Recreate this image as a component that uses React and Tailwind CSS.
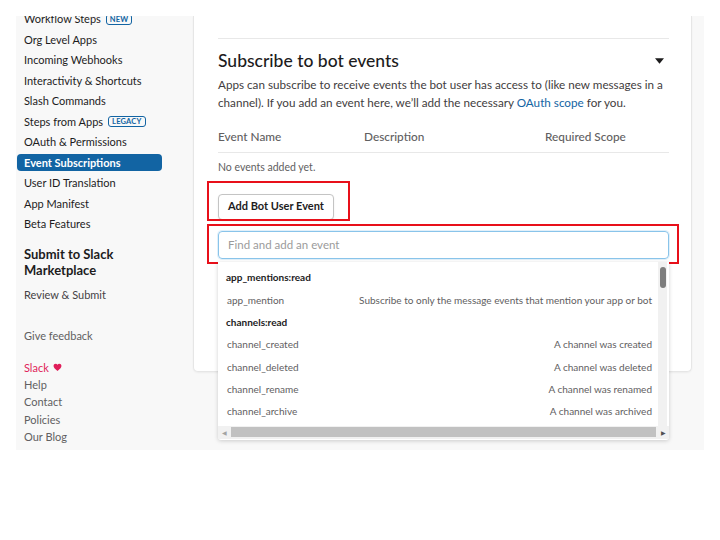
import React from "react";

const navItems = [
  { label: "Workflow Steps", badge: "NEW" },
  { label: "Org Level Apps" },
  { label: "Incoming Webhooks" },
  { label: "Interactivity & Shortcuts" },
  { label: "Slash Commands" },
  { label: "Steps from Apps", badge: "LEGACY" },
  { label: "OAuth & Permissions" },
  { label: "Event Subscriptions", active: true },
  { label: "User ID Translation" },
  { label: "App Manifest" },
  { label: "Beta Features" },
];

const footerLinks = ["Help", "Contact", "Policies", "Our Blog"];

const eventGroups = [
  {
    scope: "app_mentions:read",
    events: [["app_mention", "Subscribe to only the message events that mention your app or bot"]],
  },
  {
    scope: "channels:read",
    events: [
      ["channel_created", "A channel was created"],
      ["channel_deleted", "A channel was deleted"],
      ["channel_rename", "A channel was renamed"],
      ["channel_archive", "A channel was archived"],
    ],
  },
];

const Sidebar = () => (
  <aside className="w-[177px] shrink-0 pl-2 pr-[24px] text-[11px] text-[#1d1c1d]">
    <ul className="-mt-[7px]">
      {navItems.map((item) => (
        <li key={item.label} className="h-[20.5px] flex items-center">
          <span
            className={
              item.active
                ? "w-full h-[17px] flex items-center px-[7px] -ml-[7px] rounded bg-[#1264a3] text-white font-bold"
                : "flex items-center"
            }
          >
            {item.label}
            {item.badge && (
              <span className="ml-[5px] px-[3px] h-[11px] leading-[10px] border border-[#1264a3] rounded-[3px] text-[7.5px] font-bold text-[#1264a3] tracking-wide">
                {item.badge}
              </span>
            )}
          </span>
        </li>
      ))}
    </ul>

    <h3 className="mt-[11px] text-[13px] leading-[16px] font-bold">
      Submit to Slack
      <br />
      Marketplace
    </h3>
    <div className="mt-[9px] text-[#454245]">Review &amp; Submit</div>

    <div className="mt-[25px] text-[#616061]">Give feedback</div>

    <ul className="mt-[14px] text-[#616061] leading-[17.4px]">
      <li className="text-[#e01e5a] flex items-center gap-[4px]">
        Slack
        <svg viewBox="0 0 24 24" className="w-[9px] h-[9px]" fill="#e01e5a">
          <path d="M12 21.5 10.5 20.1C5.1 15.3 1.5 12 1.5 8 1.5 4.7 4.1 2.2 7.3 2.2c1.8 0 3.6.9 4.7 2.3 1.1-1.4 2.9-2.3 4.7-2.3 3.2 0 5.8 2.5 5.8 5.8 0 4-3.6 7.3-9 12.1L12 21.5Z" />
        </svg>
      </li>
      {footerLinks.map((l) => (
        <li key={l}>{l}</li>
      ))}
    </ul>
  </aside>
);

const EventPicker = () => (
  <div className="absolute left-0 right-0 top-[31px] h-[178px] bg-white shadow-[0_1px_4px_rgba(0,0,0,0.18)] rounded-b-[3px] flex flex-col">
    <div className="flex flex-1 min-h-0">
      <div className="flex-1 pt-[5px] pl-[8px] pr-[6px] text-[10px]">
        {eventGroups.map((g) => (
          <div key={g.scope}>
            <div className="h-[22.3px] flex items-center font-bold text-[#1d1c1d]">{g.scope}</div>
            {g.events.map(([name, desc]) => (
              <div key={name} className="h-[22.3px] flex items-center justify-between text-[#616061]">
                <span className="pl-[1px]">{name}</span>
                <span>{desc}</span>
              </div>
            ))}
          </div>
        ))}
      </div>
      <div className="w-[9px] mr-[2px] bg-[#f1f1f1] pt-[5px] flex justify-center">
        <div className="w-[6px] h-[21px] rounded-[3px] bg-[#7d7d7d]" />
      </div>
    </div>
    <div className="h-[13px] mb-[1px] bg-[#f1f1f1] flex items-center px-[2px] gap-[3px]">
      <span className="text-[6px] text-[#a3a3a3] w-[8px] text-center">◀</span>
      <div className="flex-1 h-[10px] bg-[#c1c1c1]" />
      <span className="text-[6px] text-[#505050] w-[8px] text-center">▶</span>
    </div>
  </div>
);

const MainCard = () => (
  <section className="w-[499px] h-[356px] bg-white border border-t-0 border-[#e6e6e6] rounded-b-[5px] shadow-[0_1px_2px_rgba(0,0,0,0.05)] pl-[24px] pr-[22px] pt-[22px] text-[#1d1c1d]">
    <div className="border-t border-[#e8e8e8]" />
    <div className="mt-[10px] flex items-center justify-between">
      <h2 className="text-[17.5px] leading-[24px] font-medium">Subscribe to bot events</h2>
      <svg viewBox="0 0 10 6" className="w-[9px] h-[6px] mr-[5px]" fill="#1d1c1d">
        <path d="M0 0h10L5 6z" />
      </svg>
    </div>
    <p className="mt-[3px] text-[11.7px] leading-[17.5px] text-[#3f3d40]">
      Apps can subscribe to receive events the bot user has access to (like new messages in a
      channel). If you add an event here, we’ll add the necessary{" "}
      <span className="text-[#1264a3]">OAuth scope</span> for you.
    </p>

    <div className="mt-[17px] flex text-[11.8px] text-[#616061] font-medium pb-[6px] border-b border-[#e8e8e8]">
      <span className="w-[146px]">Event Name</span>
      <span className="w-[181px]">Description</span>
      <span>Required Scope</span>
    </div>
    <div className="mt-[7px] text-[10.5px] text-[#616061]">No events added yet.</div>

    <div className="relative mt-[17px] w-fit">
      <button className="h-[26px] px-[9px] border border-[#c4c4c4] rounded-[4px] bg-white text-[11px] font-bold text-[#1d1c1d] shadow-[0_1px_2px_rgba(0,0,0,0.08)]">
        Add Bot User Event
      </button>
      <div className="absolute -left-[11px] -top-[11px] w-[143px] h-[40px] border-2 border-[#e8101a] pointer-events-none" />
    </div>

    <div className="relative mt-[11px]">
      <input
        className="w-full h-[28px] px-[9px] border border-[#89c4ea] rounded-[4px] text-[11.5px] text-[#1d1c1d] placeholder-[#9b9b9b] outline-none shadow-[0_0_0_1px_rgba(137,196,234,0.25)]"
        placeholder="Find and add an event"
      />
      <div className="absolute -left-[11px] -right-[10px] -top-[7px] h-[40px] border-2 border-[#e8101a] pointer-events-none" />
      <EventPicker />
    </div>
  </section>
);

export default function App() {
  return (
    <div className="w-[720px] h-[540px] bg-white pt-4 pl-4 font-['Lato','Noto_Sans',sans-serif]">
      <div className="w-[688px] h-[434px] bg-[#f8f8f8] overflow-hidden flex">
        <Sidebar />
        <main className="flex-1">
          <MainCard />
        </main>
      </div>
    </div>
  );
}
